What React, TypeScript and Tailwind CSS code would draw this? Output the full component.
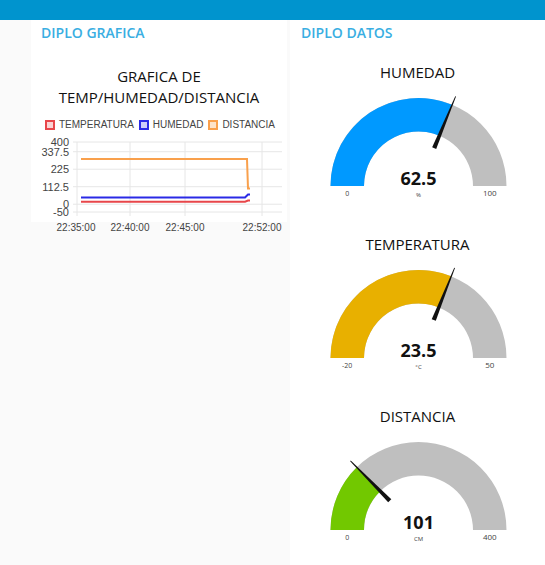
import React from "react";

const OPEN = { fontFamily: '"Open Sans", "Liberation Sans", sans-serif' };

type GaugeProps = {
  title: string;
  value: number;
  min: number;
  max: number;
  unit: string;
  color: string;
};

function Gauge({ title, value, min, max, unit, color }: GaugeProps) {
  const cx = 128.5;
  const cy = 98;
  const R = 88;
  const r = 54.5;
  const f = (value - min) / (max - min);
  const a = Math.PI * (1 - f);
  const pt = (rad: number) => [cx + rad * Math.cos(a), cy - rad * Math.sin(a)];
  const [ox, oy] = pt(R);
  const [ix, iy] = pt(r);
  const nx = -Math.sin(a);
  const ny = -Math.cos(a);
  const [bx, by] = pt(41);
  const [tx, ty] = pt(97);

  return (
    <div className="flex flex-col items-center h-[172px]">
      <p className="text-[15px] leading-[20px] font-medium text-[#111]">{title}</p>
      <svg width="255" height="145" className="mt-[6px]">
        <path
          d={`M ${cx - R} ${cy} A ${R} ${R} 0 0 1 ${cx + R} ${cy} L ${cx + r} ${cy} A ${r} ${r} 0 0 0 ${cx - r} ${cy} Z`}
          fill="#bfbfbf"
        />
        <path
          d={`M ${cx - R} ${cy} A ${R} ${R} 0 0 1 ${ox} ${oy} L ${ix} ${iy} A ${r} ${r} 0 0 0 ${cx - r} ${cy} Z`}
          fill={color}
        />
        <polygon
          points={`${bx + nx * 2.2},${by + ny * 2.2} ${tx + nx * 0.4},${ty + ny * 0.4} ${tx - nx * 0.4},${ty - ny * 0.4} ${bx - nx * 2.2},${by - ny * 2.2}`}
          fill="#111"
        />
        <text x={cx} y={cy - 1} textAnchor="middle" fontSize="18" fontWeight="700" fill="#111" fontFamily="Open Sans, sans-serif">
          {value}
        </text>
        <text x={cx - 71.25} y={cy + 10} textAnchor="middle" fontSize="7" fill="#444" fontFamily="Open Sans, sans-serif">
          {min}
        </text>
        <text x={cx + 71.25} y={cy + 10} textAnchor="middle" fontSize="8" fill="#444" fontFamily="Open Sans, sans-serif">
          {max}
        </text>
        <text x={cx} y={cy + 11} textAnchor="middle" fontSize="6" fill="#444" fontFamily="Open Sans, sans-serif">
          {unit}
        </text>
      </svg>
    </div>
  );
}

// y in plot svg
const py = (v: number) => 10 + (400 - v) * 0.15556;

function Chart() {
  const grid = [400, 337.5, 225, 112.5, 0, -50];
  return (
    <svg width="256" height="86" style={{ fontFamily: '"Liberation Sans", Arial, sans-serif' }}>
      {grid.map((v) => (
        <g key={v}>
          <line x1="42" x2="251" y1={py(v)} y2={py(v)} stroke="#e6e6e6" strokeWidth="1" />
          <text x="38" y={py(v) + 4} textAnchor="end" fontSize="11" fill="#444">
            {v}
          </text>
        </g>
      ))}
      {[46, 99, 154, 231].map((x) => (
        <line key={x} x1={x} x2={x} y1={py(400)} y2={py(-50) + 4} stroke="#e6e6e6" strokeWidth="1" />
      ))}
      <polyline
        points={`50,${py(290)} 216,${py(290)} 217,${py(101)} 219,${py(101)}`}
        fill="none"
        stroke="#f9a04c"
        strokeWidth="2"
      />
      <polyline
        points={`50,${py(43)} 214,${py(43)} 217,${py(62.5)} 219,${py(62.5)}`}
        fill="none"
        stroke="#2a2ae6"
        strokeWidth="2"
      />
      <polyline
        points={`50,${py(16)} 214,${py(16)} 217,${py(23.5)} 219,${py(23.5)}`}
        fill="none"
        stroke="#e8464a"
        strokeWidth="2"
      />
    </svg>
  );
}

function Legend() {
  const items = [
    { label: "TEMPERATURA", border: "border-[#e8464a]", bg: "bg-[#fbd2d3]" },
    { label: "HUMEDAD", border: "border-[#2a2ae6]", bg: "bg-[#cdcdf9]" },
    { label: "DISTANCIA", border: "border-[#f9a04c]", bg: "bg-[#fde3c9]" },
  ];
  return (
    <div
      className="flex items-center pl-[14px] gap-[5px] text-[10px] leading-[14px] text-[#444]"
      style={{ fontFamily: '"Liberation Sans", Arial, sans-serif' }}
    >
      {items.map((it) => (
        <div key={it.label} className="flex items-center gap-[4px]">
          <span className={`w-[10px] h-[10px] border-2 ${it.border} ${it.bg}`} />
          <span>{it.label}</span>
        </div>
      ))}
    </div>
  );
}

export default function App() {
  return (
    <div className="w-[545px] h-[565px] overflow-hidden bg-[#fafafa]" style={OPEN}>
      <div className="h-[20px] bg-[#0094ce]" />
      <div className="flex pl-[31px] gap-[3px]">
        <div className="w-[256px]">
          <div className="bg-white h-[202px]">
            <h2 className="pl-[10px] pt-[3px] text-[14px] leading-[20px] font-semibold text-[#3aaee2]">
              DIPLO GRAFICA
            </h2>
            <div className="mt-[23px] text-center text-[15px] leading-[21px] font-medium text-[#111]">
              <p>GRAFICA DE</p>
              <p>TEMP/HUMEDAD/DISTANCIA</p>
            </div>
            <div className="mt-[10px]">
              <Legend />
            </div>
            <Chart />
          </div>
          <svg width="256" height="16" style={{ fontFamily: '"Liberation Sans", Arial, sans-serif' }}>
            <text x="45" y="9" textAnchor="middle" fontSize="10" fill="#444">22:35:00</text>
            <text x="99" y="9" textAnchor="middle" fontSize="10" fill="#444">22:40:00</text>
            <text x="154" y="9" textAnchor="middle" fontSize="10" fill="#444">22:45:00</text>
            <text x="231" y="9" textAnchor="middle" fontSize="10" fill="#444">22:52:00</text>
          </svg>
        </div>
        <div className="w-[255px] h-[545px] bg-white">
          <h2 className="pl-[11px] pt-[3px] text-[14px] leading-[20px] font-semibold text-[#3aaee2]">
            DIPLO DATOS
          </h2>
          <div className="mt-[19px]">
            <Gauge title="HUMEDAD" value={62.5} min={0} max={100} unit="%" color="#0099ff" />
            <Gauge title="TEMPERATURA" value={23.5} min={-20} max={50} unit="°C" color="#e8b000" />
            <Gauge title="DISTANCIA" value={101} min={0} max={400} unit="CM" color="#72c800" />
          </div>
        </div>
      </div>
    </div>
  );
}
